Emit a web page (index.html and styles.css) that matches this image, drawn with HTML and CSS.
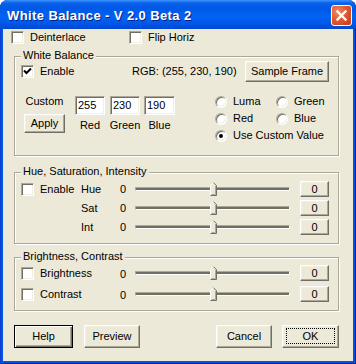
FILE: index.html
```html
<!DOCTYPE html>
<html lang="en">
<head>
    <meta charset="UTF-8">
    <title>White Balance - V 2.0 Beta 2</title>
    <link rel="stylesheet" href="styles.css">
</head>
<body>
    <div class="window">
        <div class="titlebar">
            <span class="title">White Balance - V 2.0 Beta 2</span>
            <span class="close">
                <svg width="21" height="21" viewBox="0 0 21 21">
                    <path d="M6.5 6.5 L14.5 14.5 M14.5 6.5 L6.5 14.5" stroke="#fff" stroke-width="2.4" stroke-linecap="square"/>
                </svg>
            </span>
        </div>
        <div class="client">
            <div class="top-row">
                <label class="check deint"><span class="box"></span>Deinterlace</label>
                <label class="check"><span class="box"></span>Flip Horiz</label>
            </div>

            <!-- white balance -->
            <div class="group wb">
                <span class="legend">White Balance</span>
                <div class="wb-head">
                    <label class="check wb-enable">
                        <span class="box"><svg width="9" height="9" viewBox="0 0 9 9"><path d="M1 3.5 L3.5 6 L8 1.5" stroke="#000" stroke-width="2" fill="none"/></svg></span>Enable
                    </label>
                    <span class="rgb">RGB: (255, 230, 190)</span>
                    <button class="btn sample">Sample Frame</button>
                </div>
                <div class="wb-body">
                    <div class="col custom">
                        <span>Custom</span>
                        <button class="btn apply">Apply</button>
                    </div>
                    <div class="col chan red"><span class="field">255</span><span class="cap">Red</span></div>
                    <div class="col chan green"><span class="field">230</span><span class="cap">Green</span></div>
                    <div class="col chan blue"><span class="field">190</span><span class="cap">Blue</span></div>
                    <div class="radios">
                        <label class="radio"><span class="ring"></span>Luma</label>
                        <label class="radio"><span class="ring"></span>Green</label>
                        <label class="radio"><span class="ring"></span>Red</label>
                        <label class="radio"><span class="ring"></span>Blue</label>
                        <label class="radio wide"><span class="ring on"></span>Use Custom Value</label>
                    </div>
                </div>
            </div>

            <!-- hue / sat / int -->
            <div class="group hsi">
                <span class="legend">Hue, Saturation, Intensity</span>
                <div class="rows">
                    <div class="srow">
                        <label class="check"><span class="box"></span>Enable</label>
                        <span>Hue</span><span class="val">0</span>
                        <div class="slider"><span class="line"></span><svg class="thumb" width="7" height="14" viewBox="0 0 7 14"><path d="M0 14 V3.5 L3.5 0 L7 3.5 V14 Z" fill="#ece9d8"/><path d="M0.5 13.5 V3.7 L3.5 0.7" stroke="#fff" fill="none"/><path d="M3.5 0.7 L6.5 3.7 V13.5 H0.5" stroke="#716f64" fill="none"/><path d="M5.5 4 V12.5 H1.5" stroke="#aca899" fill="none"/></svg></div>
                        <button class="btn small">0</button>
                    </div>
                    <div class="srow">
                        <span></span>
                        <span>Sat</span><span class="val">0</span>
                        <div class="slider"><span class="line"></span><svg class="thumb" width="7" height="14" viewBox="0 0 7 14"><path d="M0 14 V3.5 L3.5 0 L7 3.5 V14 Z" fill="#ece9d8"/><path d="M0.5 13.5 V3.7 L3.5 0.7" stroke="#fff" fill="none"/><path d="M3.5 0.7 L6.5 3.7 V13.5 H0.5" stroke="#716f64" fill="none"/><path d="M5.5 4 V12.5 H1.5" stroke="#aca899" fill="none"/></svg></div>
                        <button class="btn small">0</button>
                    </div>
                    <div class="srow">
                        <span></span>
                        <span>Int</span><span class="val">0</span>
                        <div class="slider"><span class="line"></span><svg class="thumb" width="7" height="14" viewBox="0 0 7 14"><path d="M0 14 V3.5 L3.5 0 L7 3.5 V14 Z" fill="#ece9d8"/><path d="M0.5 13.5 V3.7 L3.5 0.7" stroke="#fff" fill="none"/><path d="M3.5 0.7 L6.5 3.7 V13.5 H0.5" stroke="#716f64" fill="none"/><path d="M5.5 4 V12.5 H1.5" stroke="#aca899" fill="none"/></svg></div>
                        <button class="btn small">0</button>
                    </div>
                </div>
            </div>

            <!-- brightness / contrast -->
            <div class="group bc">
                <span class="legend">Brightness, Contrast</span>
                <div class="rows">
                    <div class="srow">
                        <label class="check span2"><span class="box"></span>Brightness</label>
                        <span class="val low">0</span>
                        <div class="slider"><span class="line"></span><svg class="thumb" width="7" height="14" viewBox="0 0 7 14"><path d="M0 14 V3.5 L3.5 0 L7 3.5 V14 Z" fill="#ece9d8"/><path d="M0.5 13.5 V3.7 L3.5 0.7" stroke="#fff" fill="none"/><path d="M3.5 0.7 L6.5 3.7 V13.5 H0.5" stroke="#716f64" fill="none"/><path d="M5.5 4 V12.5 H1.5" stroke="#aca899" fill="none"/></svg></div>
                        <button class="btn small">0</button>
                    </div>
                    <div class="srow">
                        <label class="check span2"><span class="box"></span>Contrast</label>
                        <span class="val low">0</span>
                        <div class="slider"><span class="line"></span><svg class="thumb" width="7" height="14" viewBox="0 0 7 14"><path d="M0 14 V3.5 L3.5 0 L7 3.5 V14 Z" fill="#ece9d8"/><path d="M0.5 13.5 V3.7 L3.5 0.7" stroke="#fff" fill="none"/><path d="M3.5 0.7 L6.5 3.7 V13.5 H0.5" stroke="#716f64" fill="none"/><path d="M5.5 4 V12.5 H1.5" stroke="#aca899" fill="none"/></svg></div>
                        <button class="btn small">0</button>
                    </div>
                </div>
            </div>

            <div class="actions">
                <button class="btn big default help">Help</button>
                <button class="btn big preview">Preview</button>
                <button class="btn big cancel">Cancel</button>
                <button class="btn big ok"><span class="focus">OK</span></button>
            </div>
        </div>
    </div>
</body>
</html>
```

FILE: styles.css
```css
* {
    box-sizing: border-box;
}
body {
    margin: 0;
    background: #fff;
    font-family: "Liberation Sans", Arial, sans-serif;
    font-size: 11px;
    line-height: 13px;
    color: #000;
}
.window {
    width: 356px;
    height: 364px;
    display: flex;
    flex-direction: column;
    background: #0054e3;
    border-radius: 8px 8px 0 0;
    overflow: hidden;
    box-shadow: inset 1px 0 #0a3fd0, inset -1px 0 #001ea0, inset 0 -1px #001ea0;
}
.titlebar {
    height: 29px;
    flex-shrink: 0;
    display: flex;
    align-items: center;
    justify-content: space-between;
    padding: 0 4px 0 7px;
    background: linear-gradient(to bottom, #3d95ff 0, #0a61ea 3px, #0058e6 8px, #0263f2 17px, #0056e6 24px, #0046d2 29px);
}
.title {
    padding-top: 2px;
    color: #fff;
    font-weight: bold;
    font-size: 13px;
    letter-spacing: 0.4px;
    text-shadow: 1px 1px #0a1f8a;
}
.close {
    width: 21px;
    height: 21px;
    margin-top: 2px;
    border: 1px solid #fff;
    border-radius: 3px;
    background: radial-gradient(circle at 30% 30%, #ee8a68 0, #e2582f 45%, #c63c16 100%);
}
.close svg {
    display: block;
    margin: -1px;
}
.client {
    flex: 1;
    margin: 0 3px 3px;
    background: #ece9d8;
}

/* check boxes */
.check {
    display: flex;
    align-items: center;
    white-space: nowrap;
}
.box {
    width: 13px;
    height: 13px;
    margin-right: 6px;
    flex-shrink: 0;
    background: #fff;
    border: 1px solid;
    border-color: #aca899 #fff #fff #aca899;
    box-shadow: inset 1px 1px #716f64, inset -1px -1px #f1efe2;
    display: flex;
    align-items: center;
    justify-content: center;
}
.box svg {
    display: block;
}
.top-row {
    display: flex;
    padding: 2px 0 0 8px;
    height: 15px;
}
.deint {
    width: 118px;
}

/* group boxes */
.group {
    position: relative;
    margin-left: 11px;
    width: 325px;
    border: 1px solid #aca899;
    box-shadow: 1px 1px 0 #fff, inset 1px 1px 0 #fff;
}
.legend {
    position: absolute;
    top: -8px;
    left: 6px;
    padding: 0 2px;
    background: #ece9d8;
}
.wb {
    margin-top: 12px;
    height: 100px;
}
.hsi {
    margin-top: 16px;
    height: 72px;
}
.bc {
    margin-top: 13px;
    height: 54px;
}

/* buttons */
.btn {
    font: inherit;
    color: #000;
    background: #ece9d8;
    border: 1px solid;
    border-color: #fff #716f64 #716f64 #fff;
    box-shadow: inset -1px -1px #aca899, inset 1px 1px #f1efe2;
    padding: 0;
    margin: 0;
    border-radius: 0;
}
.btn.default {
    border: 1px solid #000;
    box-shadow: inset 1px 1px #fff, inset -1px -1px #716f64, inset -2px -2px #aca899;
}

/* white balance */
.wb-head {
    display: flex;
    align-items: center;
    height: 21px;
    margin-top: 4px;
    padding-right: 9px;
}
.wb-enable {
    width: 111px;
    margin-left: 6px;
}
.sample {
    margin-left: auto;
    width: 84px;
    height: 21px;
}
.wb-body {
    display: flex;
    margin-top: 13px;
}
.col {
    display: flex;
    flex-direction: column;
    align-items: center;
}
.custom {
    width: 41px;
    margin-left: 9px;
}
.apply {
    width: 41px;
    height: 19px;
    margin-top: 6px;
}
.chan {
    margin-top: 1px;
}
.red {
    width: 30px;
    margin-left: 10px;
}
.green {
    width: 30px;
    margin-left: 5px;
}
.blue {
    width: 31px;
    margin-left: 4px;
}
.field {
    width: 100%;
    height: 19px;
    padding: 2px 0 0 2px;
    background: #fff;
    border: 1px solid;
    border-color: #aca899 #fff #fff #aca899;
    box-shadow: inset 1px 1px #716f64, inset -1px -1px #f1efe2;
}
.cap {
    margin-top: 4px;
}
.radios {
    display: grid;
    grid-template-columns: 61px auto;
    grid-auto-rows: 17px;
    margin: -2px 0 0 40px;
}
.radio {
    display: flex;
    align-items: center;
    white-space: nowrap;
}
.radio.wide {
    grid-column: span 2;
}
.ring {
    width: 12px;
    height: 12px;
    margin-right: 6px;
    border-radius: 50%;
    background: #fff;
    border: 1px solid;
    border-color: #aca899 #fff #fff #aca899;
    box-shadow: inset 1px 1px #716f64, inset -1px -1px #f1efe2;
    display: flex;
    align-items: center;
    justify-content: center;
}
.ring.on::after {
    content: '';
    width: 4px;
    height: 4px;
    border-radius: 50%;
    background: #000;
}

/* slider rows */
.rows {
    display: flex;
    flex-direction: column;
}
.hsi .rows {
    padding-top: 8px;
    gap: 3px;
}
.bc .rows {
    padding-top: 7px;
    gap: 5px;
}
.srow {
    display: grid;
    grid-template-columns: 66px 39px 15px 155px 39px;
    align-items: center;
    height: 16px;
}
.srow .check {
    padding-left: 6px;
}
.span2 {
    grid-column: span 2;
}
.val.low {
    padding-top: 3px;
}
.slider {
    position: relative;
    height: 16px;
    display: flex;
    align-items: center;
}
.line {
    width: 100%;
    height: 4px;
    background: #716f64;
    border: 1px solid;
    border-color: #aca899 #fff #fff #aca899;
}
.thumb {
    position: absolute;
    left: 75px;
    top: 1px;
}
.small {
    justify-self: end;
    width: 29px;
    height: 16px;
}

/* bottom buttons */
.actions {
    display: flex;
    margin-top: 14px;
    padding: 0 14px 0 11px;
}
.big {
    height: 23px;
}
.help {
    width: 59px;
}
.preview {
    width: 56px;
    margin-left: 11px;
}
.cancel {
    width: 56px;
    margin-left: auto;
}
.ok {
    width: 57px;
    margin-left: 10px;
    padding: 2px 3px 3px;
}
.focus {
    display: flex;
    align-items: center;
    justify-content: center;
    height: 100%;
    border: 1px dotted #000;
}
```
